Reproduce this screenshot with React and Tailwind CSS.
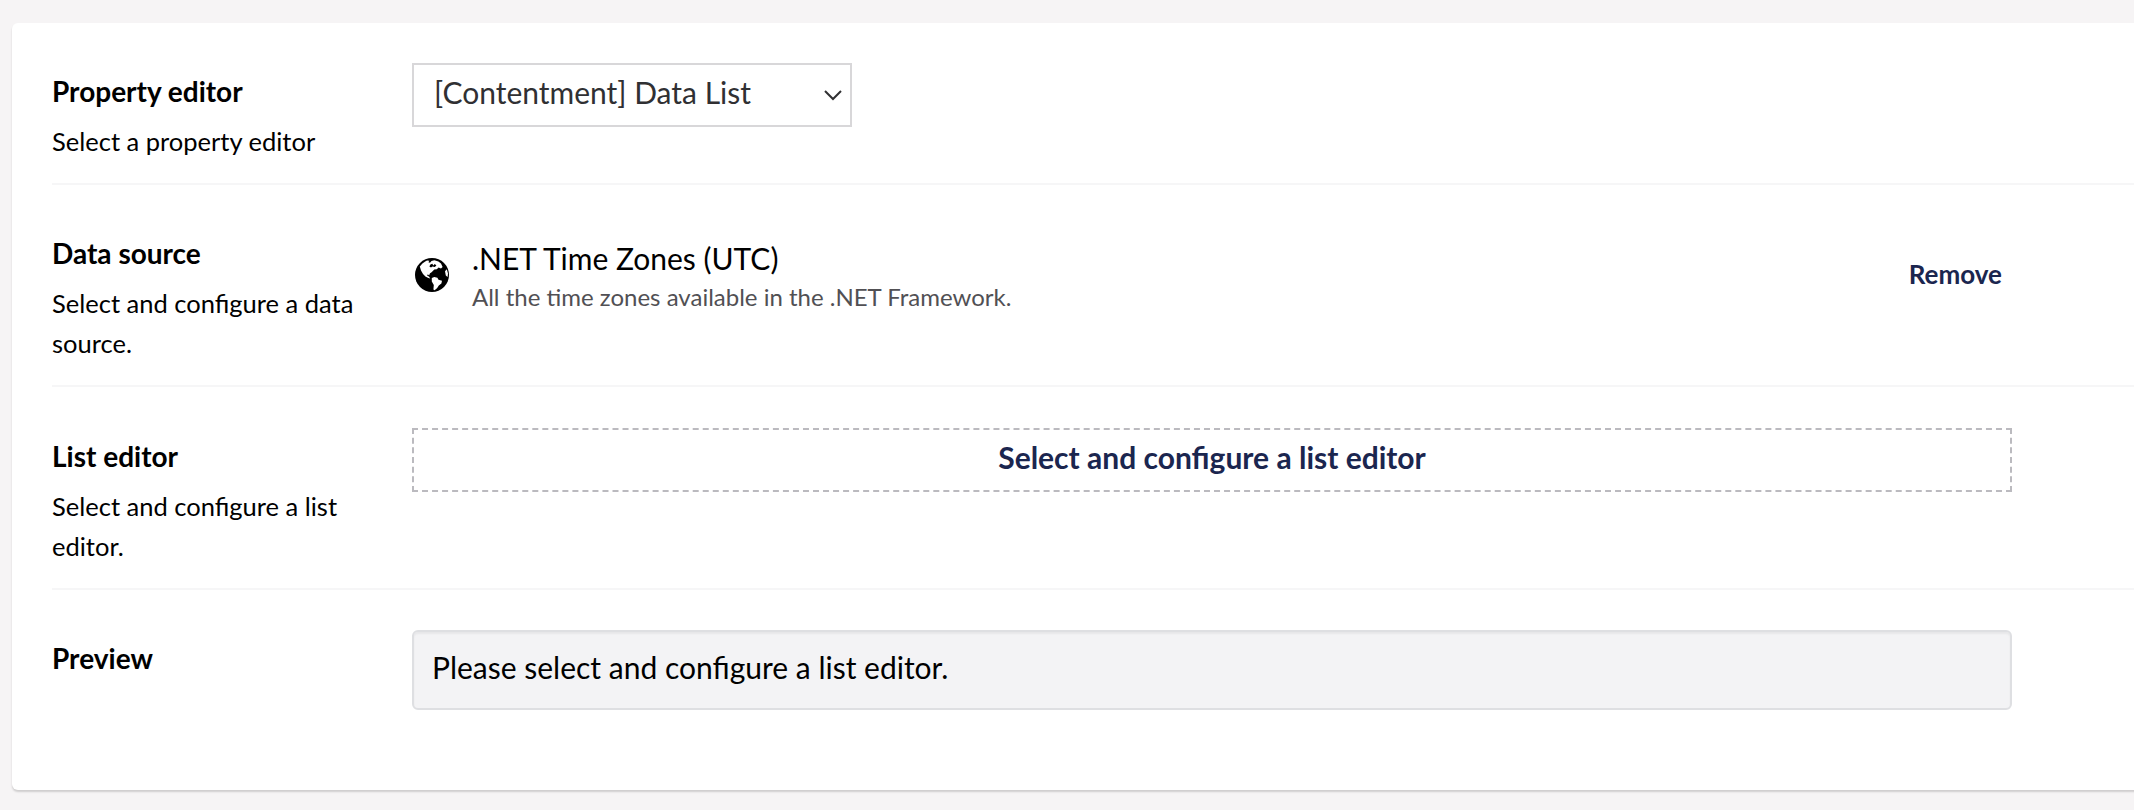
import React from "react";

function Row({ label, description, className, children }) {
  return (
    <section className={`flex items-start ${className}`}>
      <div className="w-[360px] shrink-0 pt-[8px]">
        <h2 className="text-[28px] leading-[40px] font-bold">{label}</h2>
        {description && (
          <p className="mt-[10px] w-[320px] text-[25.5px] leading-[40px]">{description}</p>
        )}
      </div>
      <div className="w-[1600px] shrink-0">{children}</div>
    </section>
  );
}

function Globe() {
  return (
    <svg className="size-[34px] shrink-0" viewBox="0 0 34 34">
      <circle cx="17" cy="17" r="17" fill="#000" />
      <path
        fill="#fff"
        d="M4.8 8.6 7.4 5.4 10.2 3.6 12 2.6 14.4 2.8 13.4 4.2 15 4.8 16.5 3 19.4 2.2 23.4 3.4 26 5.6 27.6 9 26 10.4 23.6 9.6 21.8 11.2 19.3 11.6 16.6 14.2 15 15.2 14.1 17.4 12.8 16.2 12.2 17.8 14 18.4 15.2 20.6 13.4 20 10.4 18.4 8 16 6 12.6Z M16.8 20 19.3 19 22.4 19.8 23.5 21.8 27 22.8 26.4 25.6 23.8 27.6 22.2 30 19.6 32.2 18.4 31.6 18.8 27 16.8 23.6Z M30 13.2 31.8 11.2 33 15.4 32.6 19 30.8 17.6Z"
      />
      <path
        fill="#000"
        d="M14.4 8.4 15.4 6.6 17.4 5.8 18.2 7.6 19.8 6 21.4 7.6 19.8 9 17.4 8.6 16 9.4Z"
      />
    </svg>
  );
}

export default function App() {
  return (
    <main className="h-[810px] w-[2134px] overflow-hidden bg-[#f6f4f5] pt-[23px] pl-[12px] font-['Lato',sans-serif] text-black">
      <div className="h-[767px] w-[2200px] rounded-[6px] bg-white pl-[40px] shadow-[0_2px_2px_rgba(0,0,0,0.16)]">
        <Row
          label="Property editor"
          description="Select a property editor"
          className="h-[162px] border-b-2 border-[#f6f6f7] pt-[40px]"
        >
          <div className="flex h-[64px] w-[440px] items-center justify-between border-2 border-[#d8d7d9] pr-[7px] pb-[4px] pl-[20px] text-[30px] text-[#303033]">
            <span className="pb-[1px]">[Contentment] Data List</span>
            <svg className="mt-[3px] h-[12px] w-[20px]" viewBox="0 0 20 12" fill="none" stroke="#303033" strokeWidth="2">
              <path d="M2 2 10 10 18 2" />
            </svg>
          </div>
        </Row>
        <Row
          label="Data source"
          description="Select and configure a data source."
          className="h-[202px] border-b-2 border-[#f6f6f7] pt-[40px]"
        >
          <div className="flex h-[100px] items-center pl-[3px]">
            <Globe />
            <div className="ml-[23px] grow pt-[2px]">
              <div className="text-[30px] leading-[40px]">.NET Time Zones (UTC)</div>
              <div className="text-[24px] leading-[37px] text-[#515054]">
                All the time zones available in the .NET Framework.
              </div>
            </div>
            <button className="mr-[10px] pb-[2px] text-[26px] font-bold text-[#1b264f]">Remove</button>
          </div>
        </Row>
        <Row
          label="List editor"
          description="Select and configure a list editor."
          className="h-[203px] border-b-2 border-[#f6f6f7] pt-[41px]"
        >
          <button className="flex h-[64px] w-full items-center justify-center border-2 border-dashed border-[#bbbabf] pb-[5px] text-[30px] font-bold text-[#1b264f]">
            Select and configure a list editor
          </button>
        </Row>
        <Row label="Preview" className="pt-[40px]">
          <div className="h-[80px] rounded-[6px] border-2 border-[#dedfe2] bg-[#f3f3f5] px-[18px] pt-[15px] text-[30px] leading-[40px] shadow-[inset_0_2px_2px_rgba(0,0,0,0.05)]">
            Please select and configure a list editor.
          </div>
        </Row>
      </div>
    </main>
  );
}
